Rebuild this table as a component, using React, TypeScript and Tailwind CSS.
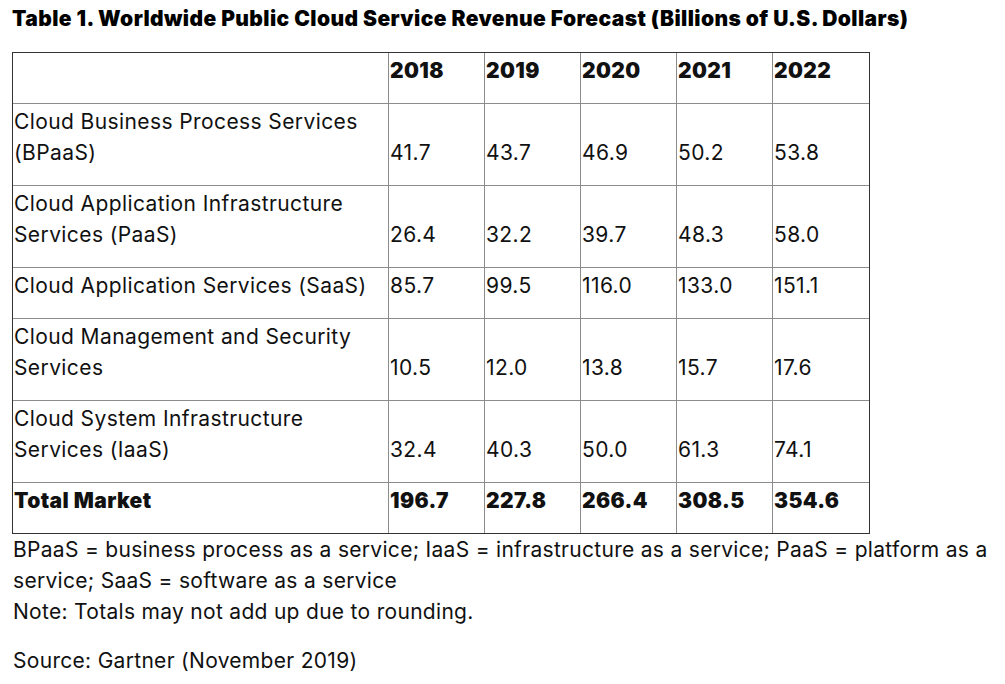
import React from 'react'

const years = ['2018', '2019', '2020', '2021', '2022']

const rows = [
    { label: 'Cloud Business Process Services (BPaaS)', values: ['41.7', '43.7', '46.9', '50.2', '53.8'] },
    { label: 'Cloud Application Infrastructure Services (PaaS)', values: ['26.4', '32.2', '39.7', '48.3', '58.0'] },
    { label: 'Cloud Application Services (SaaS)', values: ['85.7', '99.5', '116.0', '133.0', '151.1'] },
    { label: 'Cloud Management and Security Services', values: ['10.5', '12.0', '13.8', '15.7', '17.6'] },
    { label: 'Cloud System Infrastructure Services (IaaS)', values: ['32.4', '40.3', '50.0', '61.3', '74.1'] },
]

const totals = ['196.7', '227.8', '266.4', '308.5', '354.6']

const cell = 'align-bottom text-left pl-[1px] pr-[2px] pt-[2px] pb-[17px] border-[#8c8c8c]'

const App = () => {
    return (
        <div className="pl-3 pr-[3px] pt-[3px] font-['Inter','Liberation_Sans',sans-serif] text-[#111] text-[21px] leading-[31px] tracking-[0.4px]">
            <h1 className="text-[21px] font-black text-black leading-[31px] tracking-[0.4px] mb-[18px]">
                Table 1. Worldwide Public Cloud Service Revenue Forecast (Billions of U.S. Dollars)
            </h1>
            <table className="border-separate border-spacing-0 border border-[#333] w-[857px] table-fixed">
                <colgroup>
                    <col className="w-[376px]" />
                    {years.map(y => <col key={y} className="w-[96px]" />)}
                </colgroup>
                <thead>
                    <tr>
                        <th className={`${cell} border-r border-b`}></th>
                        {years.map((y, i) => (
                            <th key={y} className={`${cell} border-b font-black ${i < 4 ? 'border-r' : ''}`}>{y}</th>
                        ))}
                    </tr>
                </thead>
                <tbody>
                    {rows.map(row => (
                        <tr key={row.label}>
                            <td className={`${cell} border-r border-b`}>{row.label}</td>
                            {row.values.map((v, i) => (
                                <td key={i} className={`${cell} border-b ${i < 4 ? 'border-r' : ''}`}>{v}</td>
                            ))}
                        </tr>
                    ))}
                    <tr>
                        <td className={`${cell} border-r font-black`}>Total Market</td>
                        {totals.map((v, i) => (
                            <td key={i} className={`${cell} font-black ${i < 4 ? 'border-r' : ''}`}>{v}</td>
                        ))}
                    </tr>
                </tbody>
            </table>
            <p className="pl-[1px] mb-[18px] tracking-[0.3px]">
                BPaaS = business process as a service; IaaS = infrastructure as a service; PaaS = platform as a service; SaaS = software as a service
                <br />
                Note: Totals may not add up due to rounding.
            </p>
            <p className="pl-[1px] tracking-[0.3px]">Source: Gartner (November 2019)</p>
        </div>
    )
}

export default App
